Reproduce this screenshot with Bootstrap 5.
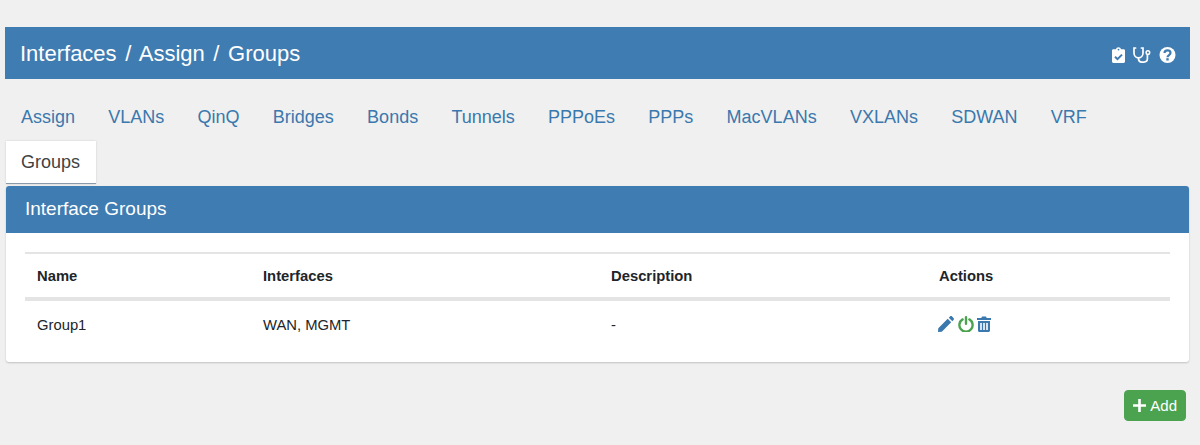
<!DOCTYPE html>
<html lang="en">
  <head>
    <meta charset="UTF-8" />
    <title>Interfaces / Assign / Groups</title>
    <link
      href="https://cdn.jsdelivr.net/npm/bootstrap@5.3.3/dist/css/bootstrap.min.css"
      rel="stylesheet"
    />
    <style>
      body {
        background: #f0f0f0;
        font-family: "Liberation Sans", Arial, sans-serif;
        color: #212121;
        height: 445px;
        overflow: hidden;
      }
      .page-wrap {
        padding: 27px 10px 0 5px;
      }
      .title-bar {
        background: #3f7cb1;
        color: #fff;
        height: 52px;
        padding: 0 14px 0 15px;
      }
      .title-bar h1 {
        font-size: 22px;
        font-weight: 400;
        word-spacing: 2.5px;
        line-height: 24px;
        margin: 2px 0 0;
      }
      .tab-strip {
        margin: 17px 0 0 1px;
        column-gap: 3.25px;
      }
      .tab-strip .nav-link {
        color: #3a78ad;
        font-size: 18px;
        line-height: 24px;
        padding: 9px 15px;
        height: 43px;
        margin-bottom: 2px;
      }
      .tab-strip .nav-link.active {
        background: #fff;
        color: #424242;
        padding-right: 16px;
        border-bottom: 1px solid #8a9aa8;
        box-shadow: 0 0 2px rgba(0, 0, 0, 0.15);
      }
      .group-panel {
        margin: 0 1px;
        border: 0;
        border-radius: 3px;
        box-shadow: 0 1px 2px rgba(0, 0, 0, 0.2);
        height: 176px;
      }
      .group-panel .card-header {
        background: #3f7cb1;
        color: #fff;
        border: 0;
        border-radius: 3px 3px 0 0;
        font-size: 19px;
        line-height: 24px;
        height: 47px;
        padding: 11px 19px 0;
      }
      .group-panel .card-body {
        padding: 19px 19px 0;
      }
      .group-table {
        font-size: 14.8px;
        margin: 0;
        table-layout: fixed;
        border-top: 2px solid #e4e4e4;
      }
      .group-table th {
        height: 46px;
        padding: 2px 12px 0;
        vertical-align: middle;
        border-bottom: 4px solid #e4e4e4;
      }
      .group-table td {
        height: 50px;
        padding: 0 12px;
        vertical-align: middle;
        border: 0;
      }
      .col-name { width: 226px; }
      .col-ifaces { width: 348px; }
      .col-desc { width: 328px; }
      .action-icons {
        gap: 3.5px;
        margin: 0 0 2px -1px;
      }
      .action-icons svg {
        display: block;
      }
      .add-btn {
        background: #4ba34f;
        border-color: #4ba34f;
        color: #fff;
        font-size: 15px;
        line-height: 21px;
        padding: 4px 8px;
        border-radius: 4px;
      }
      .add-row {
        margin-top: 28px;
        padding-right: 4px;
      }
    </style>
  </head>
  <body>
    <div class="page-wrap">
      <div class="title-bar d-flex align-items-center justify-content-between">
        <h1>Interfaces / Assign / Groups</h1>
        <div class="d-flex align-items-center gap-2 mt-1">
          <!-- clipboard check -->
          <svg width="13" height="16" viewBox="0 0 13 16">
            <path fill="#fff" d="M1.400 2.200H4C4.200 1 5.200.2 6.500.2S8.800 1 9 2.200h2.600c.8 0 1.400.6 1.400 1.400v11c0 .8-.6 1.400-1.400 1.400H1.400C.6 16 0 15.400 0 14.600v-11c0-.8.600-1.400 1.400-1.400z" />
            <circle cx="6.500" cy="2.600" r="0.900" fill="#3f7cb1" />
            <path fill="none" stroke="#3f7cb1" stroke-width="2" d="M3 9.700l2.500 2.500 4.500-4.600" />
          </svg>
          <!-- stethoscope -->
          <svg width="18" height="16" viewBox="0 0 18 16">
            <path fill="none" stroke="#fff" stroke-width="1.700" stroke-linecap="round" d="M2.600 1H1v5c0 2.700 2 4.800 4.500 4.800S10 8.700 10 6V1H8.400" />
            <path fill="none" stroke="#fff" stroke-width="1.700" d="M5.500 11v.8c0 1.900 1.400 3.300 3.200 3.300h2.100c2 0 3.600-1.500 3.600-3.500V7.800" />
            <circle cx="14.900" cy="5.600" r="1.800" fill="none" stroke="#fff" stroke-width="1.500" />
          </svg>
          <!-- question circle -->
          <svg width="17" height="16" viewBox="0 0 17 16">
            <circle cx="8.500" cy="8" r="8" fill="#fff" />
            <path fill="none" stroke="#3f7cb1" stroke-width="2.200" d="M5.500 6.100c0-1.700 1.300-2.700 3-2.700s3 1 3 2.500c0 2.200-3 2.100-3 4.300" />
            <rect x="7.300" y="11.200" width="2.400" height="2.300" fill="#3f7cb1" />
          </svg>
        </div>
      </div>

      <ul class="nav tab-strip">
        <li class="nav-item"><a class="nav-link" href="#">Assign</a></li>
        <li class="nav-item"><a class="nav-link" href="#">VLANs</a></li>
        <li class="nav-item"><a class="nav-link" href="#">QinQ</a></li>
        <li class="nav-item"><a class="nav-link" href="#">Bridges</a></li>
        <li class="nav-item"><a class="nav-link" href="#">Bonds</a></li>
        <li class="nav-item"><a class="nav-link" href="#">Tunnels</a></li>
        <li class="nav-item"><a class="nav-link" href="#">PPPoEs</a></li>
        <li class="nav-item"><a class="nav-link" href="#">PPPs</a></li>
        <li class="nav-item"><a class="nav-link" href="#">MacVLANs</a></li>
        <li class="nav-item"><a class="nav-link" href="#">VXLANs</a></li>
        <li class="nav-item"><a class="nav-link" href="#">SDWAN</a></li>
        <li class="nav-item"><a class="nav-link" href="#">VRF</a></li>
        <li class="nav-item w-100"></li>
        <li class="nav-item"><a class="nav-link active" href="#">Groups</a></li>
      </ul>

      <div class="card group-panel">
        <div class="card-header">Interface Groups</div>
        <div class="card-body">
          <table class="table group-table">
            <thead>
              <tr>
                <th class="col-name">Name</th>
                <th class="col-ifaces">Interfaces</th>
                <th class="col-desc">Description</th>
                <th>Actions</th>
              </tr>
            </thead>
            <tbody>
              <tr>
                <td>Group1</td>
                <td>WAN, MGMT</td>
                <td>-</td>
                <td>
                  <div class="action-icons d-flex align-items-center">
                    <!-- pencil -->
                    <svg width="16" height="16" viewBox="0 0 16 16">
                      <path fill="#3a78ad" d="M.3 12.200L9.700 2.800l3.500 3.500-9.400 9.400L0 16zM10.800 1.700L12 .5c.6-.6 1.500-.6 2.100 0l1.400 1.400c.6.600.6 1.500 0 2.100l-1.200 1.200z" />
                    </svg>
                    <!-- power off -->
                    <svg width="16" height="16" viewBox="0 0 16 16">
                      <path fill="none" stroke="#4ba34f" stroke-width="2.400" stroke-linecap="round" d="M4.600 3.400a6.600 6.600 0 1 0 6.800 0M8 1.300v6.500" />
                    </svg>
                    <!-- trash -->
                    <svg width="14" height="16" viewBox="0 0 14 16">
                      <path fill="#3a78ad" fill-rule="evenodd" d="M0 2h4.300L5 .5h4L9.700 2H14v2H0zM1 5h12v9.500c0 .8-.7 1.500-1.500 1.500h-9C1.700 16 1 15.300 1 14.500zm2.200 2v7h1.600V7zm3 0v7h1.600V7zm3 0v7h1.600V7z" />
                    </svg>
                  </div>
                </td>
              </tr>
            </tbody>
          </table>
        </div>
      </div>

      <div class="add-row d-flex justify-content-end">
        <button type="button" class="btn add-btn d-flex align-items-center gap-1">
          <svg width="13" height="13" viewBox="0 0 13 13">
            <path fill="#fff" d="M5.200 0h2.600v5.200H13v2.600H7.800V13H5.200V7.800H0V5.200h5.200z" />
          </svg>
          Add
        </button>
      </div>
    </div>

    <script src="https://cdn.jsdelivr.net/npm/bootstrap@5.3.3/dist/js/bootstrap.bundle.min.js"></script>
  </body>
</html>
